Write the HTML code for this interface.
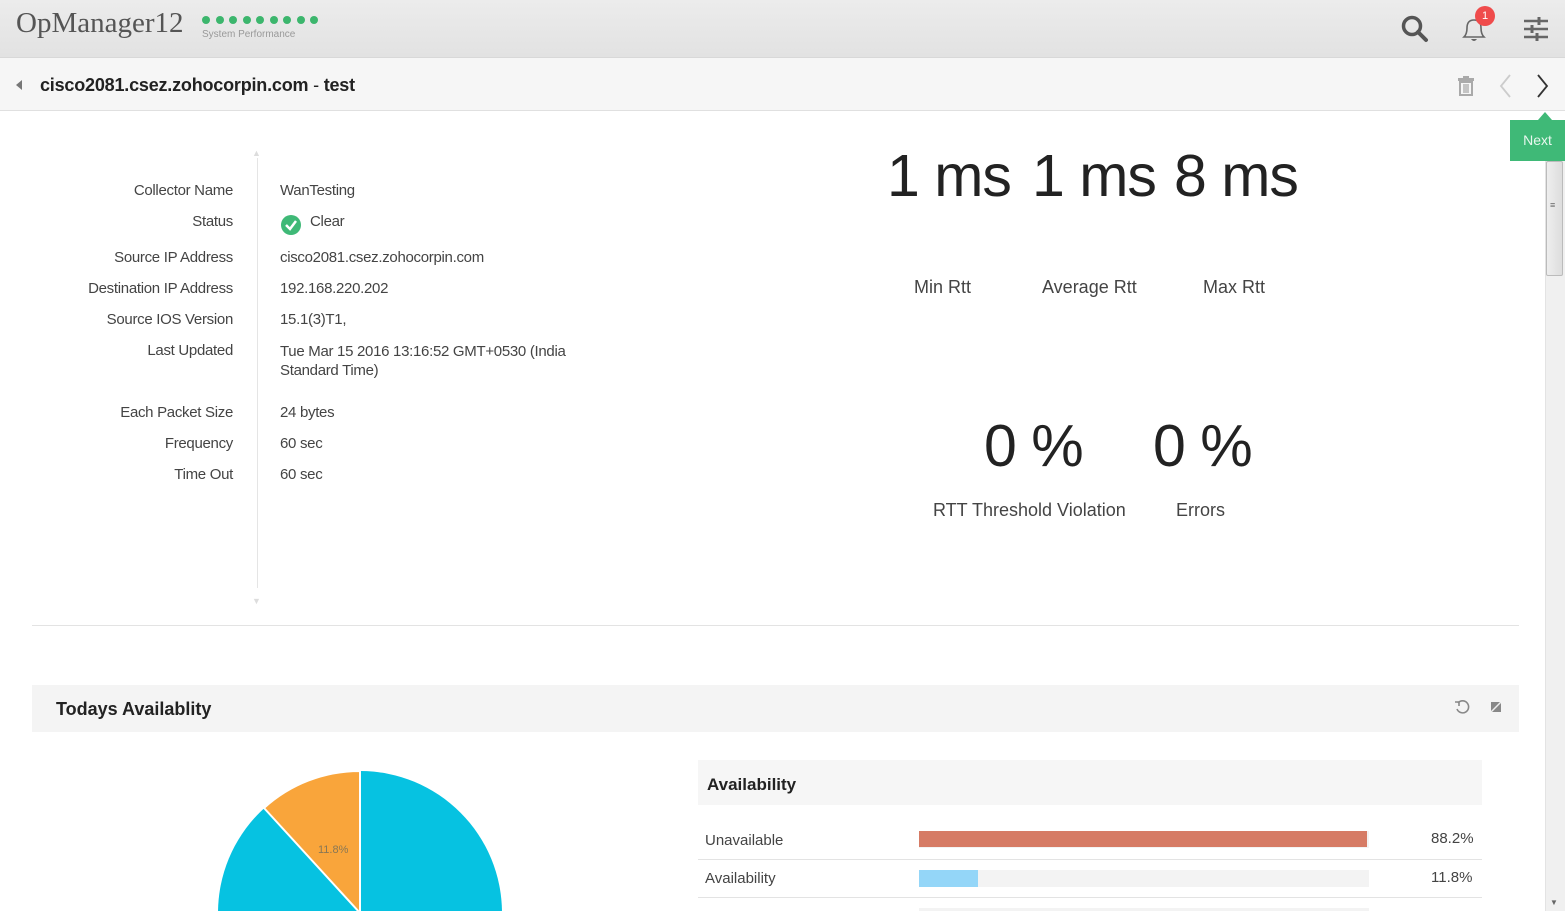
<!DOCTYPE html>
<html><head><meta charset="utf-8"><style>
*{margin:0;padding:0;box-sizing:border-box}
html,body{width:1565px;height:911px;overflow:hidden}
body{background:#fff;font-family:"Liberation Sans",sans-serif;color:#333;position:relative}
.abs{position:absolute}
.hdr{left:0;top:0;width:1565px;height:58px;background:linear-gradient(#ececec,#e2e2e2);border-bottom:1px solid #d8d8d8}
.sub{left:0;top:58px;width:1565px;height:53px;background:#f6f6f6;border-bottom:1px solid #e0e0e0}
.lbl{width:233px;text-align:right;font-size:15px;color:#444;letter-spacing:-0.3px}
.val{left:280px;font-size:15px;color:#444;letter-spacing:-0.3px}
.big{font-size:59px;color:#222;letter-spacing:-1px}
.cap{font-size:18px;color:#444}
</style></head><body>
<div class="abs hdr"></div>
<div class="abs" style="left:16px;top:7px;font-family:'Liberation Serif',serif;font-size:29px;color:#555">OpManager12</div>
<div class="abs" style="left:202px;top:16px;display:flex;gap:5.5px">
<i style="width:8px;height:8px;border-radius:50%;background:#3cb66d;display:block"></i><i style="width:8px;height:8px;border-radius:50%;background:#3cb66d;display:block"></i><i style="width:8px;height:8px;border-radius:50%;background:#3cb66d;display:block"></i><i style="width:8px;height:8px;border-radius:50%;background:#3cb66d;display:block"></i><i style="width:8px;height:8px;border-radius:50%;background:#3cb66d;display:block"></i><i style="width:8px;height:8px;border-radius:50%;background:#3cb66d;display:block"></i><i style="width:8px;height:8px;border-radius:50%;background:#3cb66d;display:block"></i><i style="width:8px;height:8px;border-radius:50%;background:#3cb66d;display:block"></i><i style="width:8px;height:8px;border-radius:50%;background:#3cb66d;display:block"></i></div>
<div class="abs" style="left:202px;top:29px;font-size:10px;color:#999">System Performance</div>
<svg class="abs" style="left:1400px;top:14px" width="30" height="30"><circle cx="12" cy="12" r="8.5" fill="none" stroke="#555" stroke-width="3.5"/><line x1="18" y1="18" x2="26" y2="26" stroke="#555" stroke-width="4" stroke-linecap="round"/></svg>
<svg class="abs" style="left:1460px;top:14px" width="30" height="30"><path d="M4 23 Q7 20 7 14 Q7 6 14 6 Q21 6 21 14 Q21 20 24 23 Z" fill="none" stroke="#666" stroke-width="1.6"/><path d="M11 25 Q14 29 17 25" fill="#666"/></svg>
<div class="abs" style="left:1475px;top:6px;width:20px;height:20px;border-radius:50%;background:#ef4b4b;color:#fff;font-size:11px;text-align:center;line-height:20px">1</div>
<svg class="abs" style="left:1522px;top:16px" width="28" height="28"><g stroke="#666" stroke-width="2.6"><line x1="2" y1="5" x2="26" y2="5"/><line x1="2" y1="13" x2="26" y2="13"/><line x1="2" y1="21" x2="26" y2="21"/></g><g stroke="#666" stroke-width="3"><line x1="17" y1="1" x2="17" y2="9"/><line x1="10" y1="9" x2="10" y2="17"/><line x1="15" y1="17" x2="15" y2="25"/></g></svg>
<div class="abs sub"></div>
<div class="abs" style="left:16px;top:80px;width:0;height:0;border-top:5px solid transparent;border-bottom:5px solid transparent;border-right:6px solid #777"></div>
<div class="abs" style="left:40px;top:75px;font-size:18px;font-weight:bold;color:#222;letter-spacing:-0.2px">cisco2081.csez.zohocorpin.com <span style="font-weight:normal">-</span> test</div>
<svg class="abs" style="left:1457px;top:76px" width="18" height="20"><rect x="1" y="2" width="16" height="3" fill="#aaa"/><rect x="6" y="0" width="6" height="3" fill="#aaa"/><rect x="3" y="6" width="12" height="13" fill="none" stroke="#aaa" stroke-width="2"/><g stroke="#aaa" stroke-width="1.3"><line x1="7" y1="8" x2="7" y2="17"/><line x1="9" y1="8" x2="9" y2="17"/><line x1="11" y1="8" x2="11" y2="17"/></g></svg>
<svg class="abs" style="left:1498px;top:73px" width="16" height="26"><path d="M12 2 L3 13 L12 24" fill="none" stroke="#ccc" stroke-width="1.8"/></svg>
<svg class="abs" style="left:1535px;top:73px" width="16" height="26"><path d="M3 2 L12 13 L3 24" fill="none" stroke="#333" stroke-width="1.8"/></svg>
<div class="abs" style="left:1510px;top:120px;width:55px;height:41px;background:#3fb977;color:#e8f7ee;font-size:14px;line-height:41px;text-align:center">Next</div>
<div class="abs" style="left:1538px;top:112px;width:0;height:0;border-left:7px solid transparent;border-right:7px solid transparent;border-bottom:8px solid #3fb977"></div>
<div class="abs" style="left:1545px;top:161px;width:20px;height:750px;background:#f0f0f0;border-left:1px solid #e3e3e3"></div>
<div class="abs" style="left:1546px;top:161px;width:17px;height:115px;background:linear-gradient(90deg,#eee,#ddd);border:1px solid #bbb;border-radius:2px"></div>
<div class="abs" style="left:1550px;top:200px;font-size:9px;color:#666">≡</div>
<div class="abs" style="left:1550px;top:898px;font-size:8px;color:#666">▼</div>

<div class="abs" style="left:257px;top:158px;width:1px;height:430px;background:#e5e5e5"></div>
<div class="abs" style="left:252px;top:148px;font-size:9px;color:#ddd">▲</div>
<div class="abs" style="left:252px;top:596px;font-size:9px;color:#ddd">▼</div>

<div class="abs lbl" style="left:0;top:182px">Collector Name</div><div class="abs val" style="top:182px">WanTesting</div>
<div class="abs lbl" style="left:0;top:213px">Status</div>
<svg class="abs" style="left:280px;top:214px" width="22" height="22"><circle cx="11" cy="11" r="10" fill="#3fb977"/><path d="M6 11 L10 15 L16 7" fill="none" stroke="#fff" stroke-width="2.5"/></svg>
<div class="abs val" style="left:310px;top:213px">Clear</div>
<div class="abs lbl" style="left:0;top:249px">Source IP Address</div><div class="abs val" style="top:249px">cisco2081.csez.zohocorpin.com</div>
<div class="abs lbl" style="left:0;top:280px">Destination IP Address</div><div class="abs val" style="top:280px">192.168.220.202</div>
<div class="abs lbl" style="left:0;top:311px">Source IOS Version</div><div class="abs val" style="top:311px">15.1(3)T1,</div>
<div class="abs lbl" style="left:0;top:342px">Last Updated</div><div class="abs val" style="top:342px;line-height:19px">Tue Mar 15 2016 13:16:52 GMT+0530 (India<br>Standard Time)</div>
<div class="abs lbl" style="left:0;top:404px">Each Packet Size</div><div class="abs val" style="top:404px">24 bytes</div>
<div class="abs lbl" style="left:0;top:435px">Frequency</div><div class="abs val" style="top:435px">60 sec</div>
<div class="abs lbl" style="left:0;top:466px">Time Out</div><div class="abs val" style="top:466px">60 sec</div>

<div class="abs big" style="left:887px;top:142px">1 ms</div>
<div class="abs big" style="left:1032px;top:142px">1 ms</div>
<div class="abs big" style="left:1174px;top:142px">8 ms</div>
<div class="abs cap" style="left:914px;top:277px">Min Rtt</div>
<div class="abs cap" style="left:1042px;top:277px">Average Rtt</div>
<div class="abs cap" style="left:1203px;top:277px">Max Rtt</div>
<div class="abs big" style="left:984px;top:412px">0 %</div>
<div class="abs big" style="left:1153px;top:412px">0 %</div>
<div class="abs cap" style="left:933px;top:500px">RTT Threshold Violation</div>
<div class="abs cap" style="left:1176px;top:500px">Errors</div>

<div class="abs" style="left:32px;top:625px;width:1487px;height:1px;background:#e3e3e3"></div>
<div class="abs" style="left:32px;top:685px;width:1487px;height:47px;background:#f4f4f4"></div>
<div class="abs" style="left:56px;top:699px;font-size:18px;font-weight:bold;color:#222">Todays Availablity</div>
<svg class="abs" style="left:1454px;top:699px" width="16" height="16"><path d="M4 4 A6 6 0 1 1 3 10" fill="none" stroke="#888" stroke-width="1.6"/><path d="M1 3 L5 3 L5 7" fill="none" stroke="#888" stroke-width="1.6"/></svg>
<svg class="abs" style="left:1491px;top:702px" width="10" height="10"><rect width="10" height="10" fill="#888"/><line x1="0" y1="10" x2="10" y2="0" stroke="#eee" stroke-width="1.5"/></svg>

<svg class="abs" style="left:0;top:700px" width="700" height="211"><circle cx="360" cy="213" r="142" fill="#06c2e1"/><path d="M360 213 L360 71 A142 142 0 0 0 264 108 Z" fill="#f9a53b" stroke="#fff" stroke-width="2"/><text x="318" y="153" font-size="11" fill="#887755" font-family="Liberation Sans">11.8%</text></svg>

<div class="abs" style="left:698px;top:760px;width:784px;height:45px;background:#f6f6f6"></div>
<div class="abs" style="left:707px;top:775px;font-size:17px;font-weight:bold;color:#222">Availability</div>
<div class="abs" style="left:705px;top:832px;font-size:15px;color:#444">Unavailable</div>
<div class="abs" style="left:919px;top:831px;width:450px;height:17px;background:#f3f3f3"></div>
<div class="abs" style="left:919px;top:831px;width:448px;height:16px;background:#d67b65"></div>
<div class="abs" style="left:1431px;top:830px;font-size:15px;color:#444">88.2%</div>
<div class="abs" style="left:698px;top:859px;width:784px;height:1px;background:#e3e3e3"></div>
<div class="abs" style="left:705px;top:870px;font-size:15px;color:#444">Availability</div>
<div class="abs" style="left:919px;top:870px;width:450px;height:17px;background:#f3f3f3"></div>
<div class="abs" style="left:919px;top:870px;width:59px;height:17px;background:#94d6f8"></div>
<div class="abs" style="left:1431px;top:869px;font-size:15px;color:#444">11.8%</div>
<div class="abs" style="left:698px;top:897px;width:784px;height:1px;background:#e3e3e3"></div>
<div class="abs" style="left:919px;top:908px;width:450px;height:3px;background:#f3f3f3"></div>
</body></html>
